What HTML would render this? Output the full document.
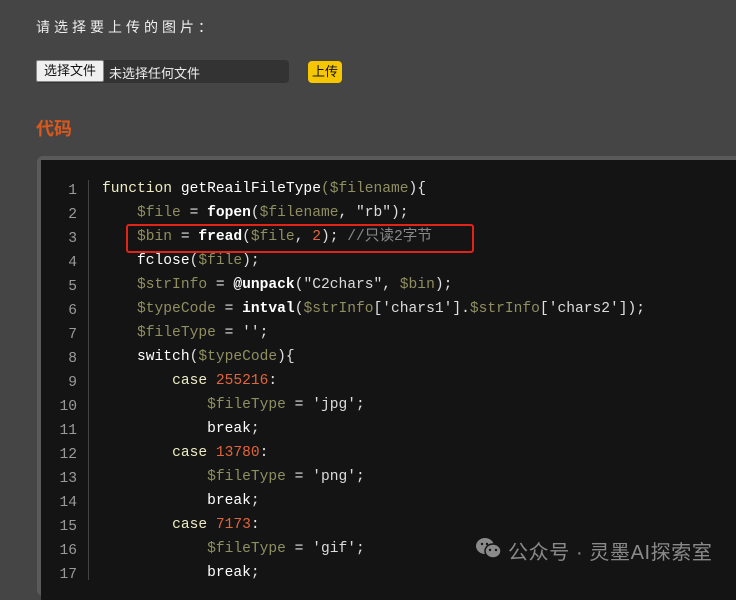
<!DOCTYPE html>
<html><head><meta charset="utf-8"><style>
body{margin:0;width:736px;height:579px;overflow:hidden;background:#454545;font-family:"Liberation Sans","Noto Sans CJK SC",sans-serif;position:relative}
.t{position:absolute;left:36px;top:17px;color:#eee;font-size:14px;letter-spacing:4px}
.file{position:absolute;left:36px;top:60px;width:253px;height:23px;background:#333;border-radius:4px}
.btn{position:absolute;left:0;top:0;width:68px;height:22px;background:#efefef;border:1px solid #888;border-radius:2px;box-sizing:border-box;font-size:13px;color:#111;text-align:center;line-height:20px}
.fn{position:absolute;left:73px;top:3px;color:#eee;font-size:13px}
.up{position:absolute;left:308px;top:61px;width:34px;height:22px;background:#f6c700;border-radius:4px;font-size:13px;text-align:center;line-height:22px;color:#111}
h2{position:absolute;left:36px;top:115px;margin:0;color:#d9581c;font-size:18px;font-weight:bold}
.box{position:absolute;left:37px;top:156px;width:720px;height:440px;background:#5a5a5a;border-radius:6px}
.code{position:absolute;left:41px;top:160px;width:720px;height:440px;background:#141414}
.ln{position:absolute;left:40px;top:179px;width:37px;text-align:right;color:#9a9a9a;font:14.6px/24px "Liberation Mono",monospace}
.sep{position:absolute;left:88px;top:180px;width:1px;height:400px;background:#444}
pre{position:absolute;left:102px;top:177px;margin:0;color:#e0e0e0;font:14.6px/24px "Liberation Mono","Noto Sans CJK SC",monospace}
.k{color:#ecebc4}.v{color:#8f8f62}.f{color:#fff;font-weight:bold}.n{color:#e0643c}.c{color:#8a8a8a}.s{color:#dcdcdc}
.hl{position:absolute;left:126px;top:224px;width:344px;height:25px;border:2px solid #e0241a;border-radius:3px}
.wm{position:absolute;left:508px;top:536px;color:#8a8a8a;font-size:20px;letter-spacing:0.6px}
</style></head><body>
<div class="t">请选择要上传的图片：</div>
<div class="file"><div class="btn">选择文件</div><div class="fn">未选择任何文件</div></div>
<div class="up">上传</div>
<h2>代码</h2>
<div class="box"></div><div class="code"></div>
<div class="ln">1<br>2<br>3<br>4<br>5<br>6<br>7<br>8<br>9<br>10<br>11<br>12<br>13<br>14<br>15<br>16<br>17</div>
<div class="sep"></div>
<pre><span class="k">function</span> <span class="f" style="font-weight:normal">getReailFileType</span><span class="v">(</span><span class="v">$filename</span>){
    <span class="v">$file</span> = <span class="f">fopen</span>(<span class="v">$filename</span>, <span class="s">"rb"</span>);
    <span class="v">$bin</span> = <span class="f">fread</span>(<span class="v">$file</span>, <span class="n">2</span>); <span class="c">//只读2字节</span>
    <span class="f" style="font-weight:normal">fclose</span>(<span class="v">$file</span>);
    <span class="v">$strInfo</span> = <span class="f">@unpack</span>(<span class="s">"C2chars"</span>, <span class="v">$bin</span>);
    <span class="v">$typeCode</span> = <span class="f">intval</span>(<span class="v">$strInfo</span>[<span class="s">'chars1'</span>].<span class="v">$strInfo</span>[<span class="s">'chars2'</span>]);
    <span class="v">$fileType</span> = <span class="s">''</span>;
    <span class="f" style="font-weight:normal">switch</span>(<span class="v">$typeCode</span>){
        <span class="k">case</span> <span class="n">255216</span>:
            <span class="v">$fileType</span> = <span class="s">'jpg'</span>;
            <span class="f" style="font-weight:normal">break</span>;
        <span class="k">case</span> <span class="n">13780</span>:
            <span class="v">$fileType</span> = <span class="s">'png'</span>;
            <span class="f" style="font-weight:normal">break</span>;
        <span class="k">case</span> <span class="n">7173</span>:
            <span class="v">$fileType</span> = <span class="s">'gif'</span>;
            <span class="f" style="font-weight:normal">break</span>;</pre>
<div class="hl"></div>
<svg style="position:absolute;left:474px;top:536px" width="30" height="24" viewBox="0 0 30 24"><ellipse cx="11" cy="10" rx="9" ry="8" fill="#8a8a8a"/><ellipse cx="19" cy="15" rx="8" ry="7" fill="#8a8a8a" stroke="#141414" stroke-width="1.5"/><circle cx="16" cy="14" r="1.2" fill="#141414"/><circle cx="22" cy="14" r="1.2" fill="#141414"/><circle cx="8" cy="8" r="1.2" fill="#141414"/><circle cx="13" cy="8" r="1.2" fill="#141414"/></svg>
<div class="wm">公众号 · 灵墨AI探索室</div>
</body></html>
